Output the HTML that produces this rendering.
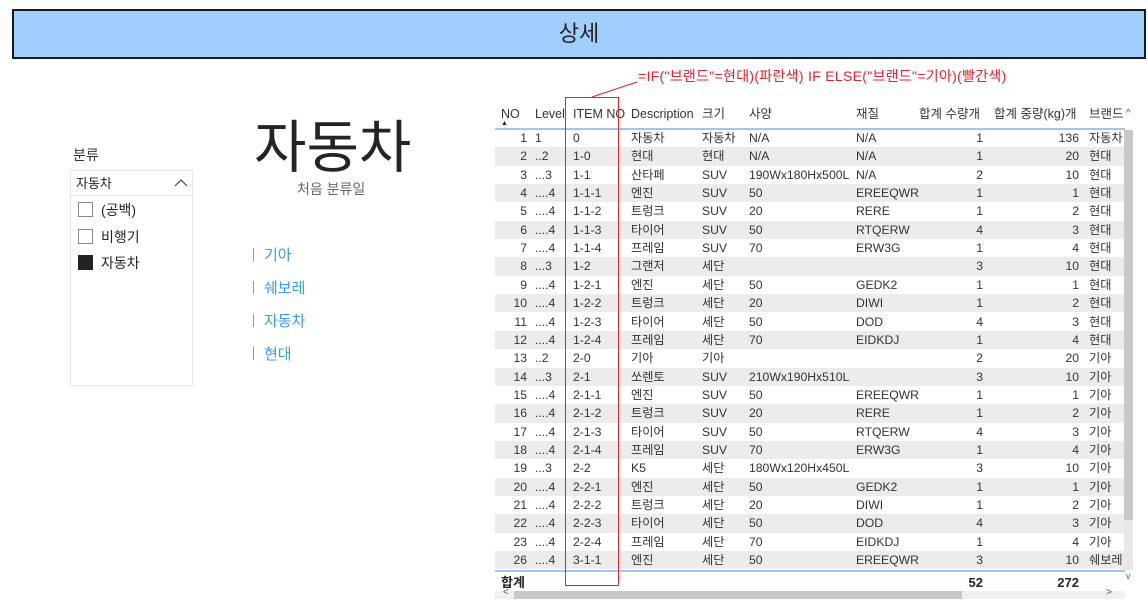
<!DOCTYPE html>
<html><head><meta charset="utf-8"><style>
*{margin:0;padding:0;box-sizing:border-box}
body{width:1148px;height:607px;background:#fff;position:relative;overflow:hidden;font-family:"Liberation Sans","Noto Sans CJK KR",sans-serif;color:#252423}
.a{position:absolute;white-space:nowrap}
#hdr{left:12px;top:9px;width:1134px;height:50px;background:#a0cfff;border:2px solid #1a1a1a;font-size:22px;text-align:center;line-height:46px;color:#222}
.r{position:absolute;left:495px;width:630px;height:18.35px;font-size:12.2px;line-height:18.35px;color:#333}
.r.g{background:#ececec}
.r span{position:absolute;top:0}
.rt{text-align:right}
.lk{font-size:15px;color:#3a9be8}
.bar{position:absolute;left:253px;width:1px;height:13px;background:#999}
</style></head><body>
<div class="a" id="hdr">상세</div>

<div class="a" style="left:73px;top:145px;font-size:14px;color:#333">분류</div>
<div class="a" style="left:70px;top:170px;width:123px;height:216px;border:1px solid #e6e6e6"></div>
<div class="a" style="left:70px;top:170px;width:123px;height:26px;border:1px solid #e6e6e6;font-size:13px;line-height:26px;padding-left:5px">자동차</div>
<svg class="a" style="left:174px;top:179px" width="14" height="9"><path d="M1 7 L7 1 L13 7" fill="none" stroke="#444" stroke-width="1.2"/></svg>
<div class="a" style="left:78px;top:202px;width:15px;height:15px;border:1px solid #888"></div>
<div class="a" style="left:101px;top:200px;font-size:14px">(공백)</div>
<div class="a" style="left:78px;top:229px;width:15px;height:15px;border:1px solid #888"></div>
<div class="a" style="left:101px;top:227px;font-size:14px">비행기</div>
<div class="a" style="left:78px;top:255px;width:15px;height:15px;background:#222"></div>
<div class="a" style="left:101px;top:253px;font-size:14px">자동차</div>

<div class="a" style="left:254px;top:113px;font-size:57px;line-height:70px;color:#252423">자동차</div>
<div class="a" style="left:297px;top:179px;font-size:14px;color:#666">처음 분류일</div>

<div class="bar" style="top:248px"></div><div class="a lk" style="left:264px;top:244px">기아</div>
<div class="bar" style="top:281px"></div><div class="a lk" style="left:264px;top:277px">쉐보레</div>
<div class="bar" style="top:314px"></div><div class="a lk" style="left:264px;top:310px">자동차</div>
<div class="bar" style="top:347px"></div><div class="a lk" style="left:264px;top:343px">현대</div>

<div class="a" style="left:638px;top:66px;font-size:14px;letter-spacing:0.3px;color:#e8202a">=IF("브랜드"=현대)(파란색) IF ELSE("브랜드"=기아)(빨간색)</div>
<svg class="a" style="left:590px;top:80px" width="50" height="20"><line x1="2" y1="17" x2="47" y2="2" stroke="#e8202a" stroke-width="1"/></svg>

<div class="r" style="top:104px;height:22px;font-size:12.5px;line-height:20px">
<span style="left:6px">NO</span><span style="left:40px">Level</span><span style="left:78px">ITEM NO</span><span style="left:136px">Description</span><span style="left:207px">크기</span><span style="left:254px">사양</span><span style="left:361px">재질</span><span style="left:424px">합계 수량개</span><span style="left:499px">합계 중량(kg)개</span><span style="left:594px">브랜드</span>
</div>
<div class="a" style="left:501px;top:120px;font-size:7px;color:#222">▲</div>
<div class="a" style="left:1126px;top:108px;font-size:10px;color:#555">^</div>
<div class="a" style="left:495px;top:128px;width:630px;height:2px;background:#9cc8ee"></div>

<div id="rows"></div>
<div class="a" style="left:495px;top:570px;width:630px;height:2px;background:#9cc8ee"></div>
<div class="a" style="left:501px;top:574px;font-size:13px;font-weight:bold;line-height:18px">합계</div>
<div class="a" style="left:940px;top:574px;width:43px;text-align:right;font-size:13px;font-weight:bold;line-height:18px">52</div>
<div class="a" style="left:1020px;top:574px;width:59px;text-align:right;font-size:13px;font-weight:bold;line-height:18px">272</div>
<div class="a" style="left:1124px;top:130px;width:9px;height:440px;background:#e8e8e8"></div>
<div class="a" style="left:1124px;top:130px;width:9px;height:390px;background:#c8c8c8"></div>
<div class="a" style="left:1126px;top:571px;font-size:9px;color:#555">v</div>
<div class="a" style="left:495px;top:591px;width:630px;height:8px;background:#f0f0f0"></div>
<div class="a" style="left:514px;top:591px;width:448px;height:8px;background:#c8c8c8"></div>
<div class="a" style="left:503px;top:587px;font-size:10px;color:#555">&lt;</div>
<div class="a" style="left:1106px;top:587px;font-size:10px;color:#555">&gt;</div>

<div class="a" style="left:565px;top:97px;width:54px;height:489px;border:1px solid #e8202a"></div>

<script>
var d=[
["1","1","0","자동차","자동차","N/A","N/A","1","136","자동차"],
["2","..2","1-0","현대","현대","N/A","N/A","1","20","현대"],
["3","...3","1-1","산타페","SUV","190Wx180Hx500L","N/A","2","10","현대"],
["4","....4","1-1-1","엔진","SUV","50","EREEQWR","1","1","현대"],
["5","....4","1-1-2","트렁크","SUV","20","RERE","1","2","현대"],
["6","....4","1-1-3","타이어","SUV","50","RTQERW","4","3","현대"],
["7","....4","1-1-4","프레임","SUV","70","ERW3G","1","4","현대"],
["8","...3","1-2","그랜저","세단","","","3","10","현대"],
["9","....4","1-2-1","엔진","세단","50","GEDK2","1","1","현대"],
["10","....4","1-2-2","트렁크","세단","20","DIWI","1","2","현대"],
["11","....4","1-2-3","타이어","세단","50","DOD","4","3","현대"],
["12","....4","1-2-4","프레임","세단","70","EIDKDJ","1","4","현대"],
["13","..2","2-0","기아","기아","","","2","20","기아"],
["14","...3","2-1","쏘렌토","SUV","210Wx190Hx510L","","3","10","기아"],
["15","....4","2-1-1","엔진","SUV","50","EREEQWR","1","1","기아"],
["16","....4","2-1-2","트렁크","SUV","20","RERE","1","2","기아"],
["17","....4","2-1-3","타이어","SUV","50","RTQERW","4","3","기아"],
["18","....4","2-1-4","프레임","SUV","70","ERW3G","1","4","기아"],
["19","...3","2-2","K5","세단","180Wx120Hx450L","","3","10","기아"],
["20","....4","2-2-1","엔진","세단","50","GEDK2","1","1","기아"],
["21","....4","2-2-2","트렁크","세단","20","DIWI","1","2","기아"],
["22","....4","2-2-3","타이어","세단","50","DOD","4","3","기아"],
["23","....4","2-2-4","프레임","세단","70","EIDKDJ","1","4","기아"],
["26","....4","3-1-1","엔진","세단","50","EREEQWR","3","10","쉐보레"]];
var h="";
d.forEach(function(r,i){
h+='<div class="r'+(i%2?' g':'')+'" style="top:'+(129+i*18.35)+'px">'+
'<span class="rt" style="left:0;width:32px">'+r[0]+'</span>'+
'<span style="left:40px">'+r[1]+'</span>'+
'<span style="left:78px">'+r[2]+'</span>'+
'<span style="left:136px">'+r[3]+'</span>'+
'<span style="left:207px">'+r[4]+'</span>'+
'<span style="left:254px">'+r[5]+'</span>'+
'<span style="left:361px">'+r[6]+'</span>'+
'<span class="rt" style="left:440px;width:48px">'+r[7]+'</span>'+
'<span class="rt" style="left:520px;width:64px">'+r[8]+'</span>'+
'<span style="left:594px">'+r[9]+'</span></div>';});
document.getElementById('rows').outerHTML=h;
</script>
</body></html>
